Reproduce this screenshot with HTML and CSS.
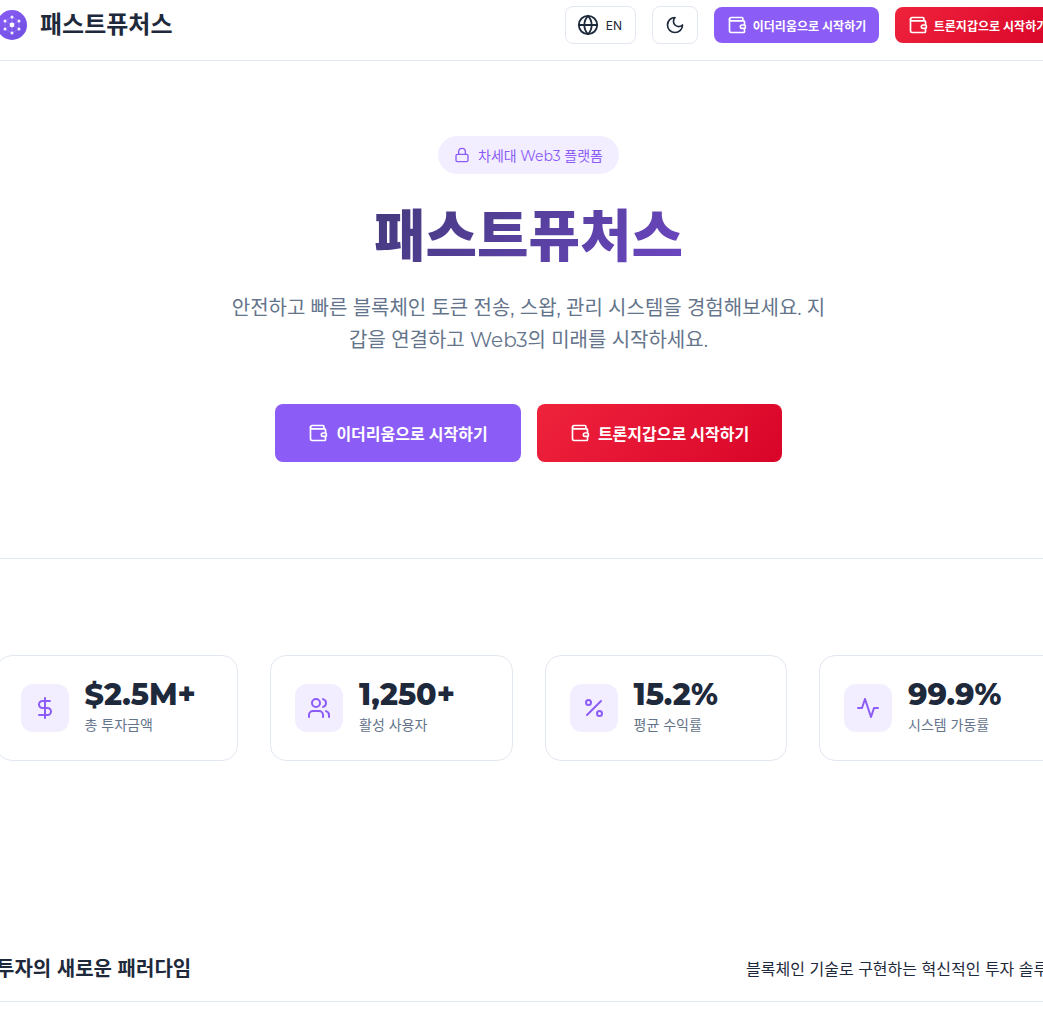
FILE: index.html
```html
<!DOCTYPE html>
<html lang="ko">
<head>
<meta charset="utf-8">
<title>패스트퓨처스</title>
<link rel="stylesheet" href="styles.css">
</head>
<body>
<svg class="defs" width="0" height="0" aria-hidden="true">
  <symbol id="wallet" viewBox="0 0 24 24"><path d="M19 7V4a1 1 0 0 0-1-1H5a2 2 0 0 0 0 4h15a1 1 0 0 1 1 1v4h-3a2 2 0 0 0 0 4h3a1 1 0 0 0 1-1v-2a1 1 0 0 0-1-1"/><path d="M3 5v14a2 2 0 0 0 2 2h15a1 1 0 0 0 1-1v-4"/></symbol>
</svg>
<div class="page">
  <header class="topbar">
    <div class="brand">
      <svg class="logo" viewBox="0 0 30 30"><defs><linearGradient id="lg" x1="0" y1="0" x2="1" y2="1"><stop offset="0" stop-color="#8b5cf6"/><stop offset="1" stop-color="#6d4fe0"/></linearGradient></defs><circle cx="15" cy="15" r="15" fill="url(#lg)"/><g fill="none" stroke="#fff" stroke-opacity=".22" stroke-width=".8"><path d="M15 7l7 4v8l-7 4-7-4v-8zM15 7v16M8 11l14 8M22 11L8 19"/></g><g fill="#fff"><circle cx="15" cy="15" r="2.4"/><circle cx="15" cy="7" r="1.5" opacity=".9"/><circle cx="15" cy="23" r="1.5" opacity=".9"/><circle cx="8" cy="11" r="1.5" opacity=".9"/><circle cx="22" cy="11" r="1.5" opacity=".9"/><circle cx="8" cy="19" r="1.5" opacity=".9"/><circle cx="22" cy="19" r="1.5" opacity=".9"/></g></svg>
      <span class="brand-name">패스트퓨처스</span>
    </div>
    <nav class="actions">
      <button class="ghost lang"><svg class="ic ic22" viewBox="0 0 24 24"><circle cx="12" cy="12" r="10"/><path d="M12 2a14.5 14.5 0 0 0 0 20 14.5 14.5 0 0 0 0-20"/><path d="M2 12h20"/></svg><span>EN</span></button>
      <button class="ghost theme"><svg class="ic ic20" viewBox="0 0 24 24"><path d="M12 3a6 6 0 0 0 9 9 9 9 0 1 1-9-9Z"/></svg></button>
      <button class="cta small violet"><svg class="ic ic20"><use href="#wallet"/></svg><span>이더리움으로 시작하기</span></button>
      <button class="cta small red"><svg class="ic ic20"><use href="#wallet"/></svg><span>트론지갑으로 시작하기</span></button>
    </nav>
  </header>

  <section class="hero">
    <div class="badge"><svg class="ic ic16" viewBox="0 0 24 24"><rect x="3" y="11" width="18" height="11" rx="2"/><path d="M7 11V7a5 5 0 0 1 10 0v4"/></svg><span>차세대 Web3 플랫폼</span></div>
    <h1>패스트퓨처스</h1>
    <p>안전하고 빠른 블록체인 토큰 전송, 스왑, 관리 시스템을 경험해보세요. 지갑을 연결하고 Web3의 미래를 시작하세요.</p>
    <div class="hero-actions">
      <button class="cta large violet"><svg class="ic ic20"><use href="#wallet"/></svg><span>이더리움으로 시작하기</span></button>
      <button class="cta large red"><svg class="ic ic20"><use href="#wallet"/></svg><span>트론지갑으로 시작하기</span></button>
    </div>
  </section>

  <section class="stats">
    <article class="stat"><div class="stat-icon"><svg class="ic ic24" viewBox="0 0 24 24"><path d="M12 2v20"/><path d="M17 5H9.5a3.5 3.5 0 0 0 0 7h5a3.5 3.5 0 0 1 0 7H6"/></svg></div><div><div class="num">$2.5M+</div><div class="lbl">총 투자금액</div></div></article>
    <article class="stat"><div class="stat-icon"><svg class="ic ic24" viewBox="0 0 24 24"><path d="M16 21v-2a4 4 0 0 0-4-4H6a4 4 0 0 0-4 4v2"/><circle cx="9" cy="7" r="4"/><path d="M22 21v-2a4 4 0 0 0-3-3.87"/><path d="M16 3.13a4 4 0 0 1 0 7.75"/></svg></div><div><div class="num">1,250+</div><div class="lbl">활성 사용자</div></div></article>
    <article class="stat"><div class="stat-icon"><svg class="ic ic24" viewBox="0 0 24 24"><line x1="19" y1="5" x2="5" y2="19"/><circle cx="6.5" cy="6.5" r="2.5"/><circle cx="17.5" cy="17.5" r="2.5"/></svg></div><div><div class="num">15.2%</div><div class="lbl">평균 수익률</div></div></article>
    <article class="stat"><div class="stat-icon"><svg class="ic ic24" viewBox="0 0 24 24"><path d="M22 12h-4l-3 9L9 3l-3 9H2"/></svg></div><div><div class="num">99.9%</div><div class="lbl">시스템 가동률</div></div></article>
  </section>

  <section class="para">
    <h2>투자의 새로운 패러다임</h2>
    <p>블록체인 기술로 구현하는 혁신적인 투자 솔루션</p>
  </section>
</div>
</body>
</html>
```
FILE: styles.css
```css
* { box-sizing: border-box; }
html, body { margin: 0; height: 100%; overflow: hidden; background: #fff; }
body { font-family: Inter, "Noto Sans CJK KR", sans-serif; color: #1e293b; }
.defs { position: absolute; }
.page { width: 1067px; margin: -10px 0 0 -5px; }
.ic { fill: none; stroke: currentColor; stroke-width: 2; stroke-linecap: round; stroke-linejoin: round; flex: none; }
.ic16 { width: 16px; height: 16px; }
.ic20 { width: 20px; height: 20px; }
.ic22 { width: 22px; height: 22px; }
.ic24 { width: 24px; height: 24px; }

.topbar { height: 71px; display: flex; align-items: center; justify-content: space-between; padding: 0 2px; border-bottom: 1px solid #e2e8f0; width: 1067px; }
.brand { display: flex; align-items: center; gap: 13px; }
.logo { width: 30px; height: 30px; }
.brand-name { font-family: "Noto Sans CJK KR", sans-serif; font-size: 24px; font-weight: 700; color: #1e293b; margin-bottom: 5px; }
.actions { display: flex; align-items: center; gap: 16px; }
button { font-family: Inter, "Noto Sans CJK KR", sans-serif; border: 0; cursor: pointer; }
.ghost { height: 38px; background: #fff; border: 1px solid #e2e8f0; border-radius: 8px; color: #1e293b; display: flex; align-items: center; justify-content: center; }
.lang { width: 71px; gap: 7px; padding: 0 2px 0 0; font-size: 12px; font-weight: 400; }
.theme { width: 46px; }
.cta { display: flex; align-items: center; justify-content: center; color: #fff; border-radius: 8px; white-space: nowrap; }
.small { width: 165px; height: 36px; gap: 6px; font-size: 12px; font-weight: 600; }
.large { height: 58px; gap: 8px; font-size: 16px; font-weight: 600; }
.hero-actions .violet { width: 246px; }
.hero-actions .red { width: 245px; }
.violet { background: #8b5cf6; }
.red { background: linear-gradient(135deg, #ef233c, #d90429); }

.hero { height: 498px; padding-top: 75px; border-bottom: 1px solid #e2e8f0; display: flex; flex-direction: column; align-items: center; }
.badge { height: 38px; width: 181px; border-radius: 19px; background: #f3eeff; color: #8b5cf6; display: flex; align-items: center; justify-content: center; gap: 8px; font-family: Montserrat, Inter, "Noto Sans CJK KR", sans-serif; font-size: 14px; font-weight: 400; }
h1 { margin: 24px 0 0; font-family: "Noto Sans CJK KR", sans-serif; font-size: 56px; font-weight: 800; line-height: 68px; background: linear-gradient(135deg, #443a7c, #6b46c1); -webkit-background-clip: text; background-clip: text; color: transparent; }
.hero > p { margin: 26px 0 0; width: 600px; text-align: center; font-family: Montserrat, Inter, "Noto Sans CJK KR", sans-serif; font-size: 20px; font-weight: 400; line-height: 32px; color: #64748b; }
.hero-actions { display: flex; gap: 16px; margin-top: 48px; }

.stats { display: grid; grid-template-columns: repeat(4, 242.5px); gap: 32px; padding: 96px 0 0 0.5px; }
.stat { height: 106px; border: 1px solid #e2e8f0; border-radius: 16px; padding: 28px 24px 0; display: flex; align-items: flex-start; gap: 16px; }
.stat-icon { width: 48px; height: 48px; border-radius: 12px; background: #f3eeff; color: #8b5cf6; display: flex; align-items: center; justify-content: center; flex: none; }
.num { font-family: Montserrat, Inter, sans-serif; font-size: 30px; font-weight: 800; line-height: 36px; margin-top: -7px; color: #1e293b; }
.lbl { font-size: 14px; font-weight: 400; color: #64748b; line-height: 20px; margin-top: 2px; }

.para { margin-top: 173px; height: 68px; padding-left: 1px; margin-right: -1px; border-bottom: 1px solid #e2e8f0; display: flex; align-items: center; justify-content: space-between; white-space: nowrap; }
.para h2 { margin: 0; font-family: "Noto Sans CJK KR", sans-serif; font-size: 20px; font-weight: 600; color: #1e293b; }
.para p { margin: 0; font-size: 16px; color: #1e293b; }
```
